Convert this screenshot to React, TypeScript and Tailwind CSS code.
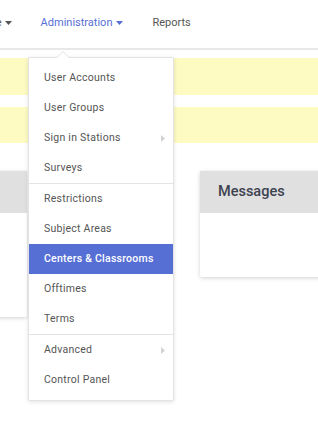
const items: { label: string; sub?: boolean; active?: boolean; divider?: boolean }[] = [
  { label: 'User Accounts' },
  { label: 'User Groups' },
  { label: 'Sign in Stations', sub: true },
  { label: 'Surveys', divider: true },
  { label: 'Restrictions' },
  { label: 'Subject Areas' },
  { label: 'Centers & Classrooms', active: true },
  { label: 'Offtimes' },
  { label: 'Terms', divider: true },
  { label: 'Advanced', sub: true },
  { label: 'Control Panel' },
]

function Caret({ className }: { className?: string }) {
  return (
    <svg width="7" height="4" viewBox="0 0 7 4" className={className}>
      <path d="M0 0h7L3.5 4z" fill="currentColor" />
    </svg>
  )
}

function AdminMenu() {
  return (
    <div className="absolute left-[28px] top-[57px] w-[146px] rounded-[2px] border border-[#e3e3e3] bg-white py-[5px] shadow-[0_1px_4px_rgba(0,0,0,0.12)]">
      <div className="absolute -top-[7px] left-[27px] h-0 w-0 border-x-[7px] border-b-[7px] border-x-transparent border-b-[#e3e3e3]" />
      <div className="absolute -top-[6px] left-[28px] h-0 w-0 border-x-[6px] border-b-[6px] border-x-transparent border-b-white" />
      {items.map((it) => (
        <div key={it.label} className={it.divider ? 'border-b border-[#e3e3e3]' : ''}>
          <div
            className={
              'flex h-[30px] items-center justify-between pl-[15px] pr-[8px] text-[10.5px] tracking-[0.25px] ' +
              (it.active ? 'bg-[#566fd5] font-medium text-white' : 'text-[#555]')
            }
          >
            <span>{it.label}</span>
            {it.sub && (
              <svg width="4" height="7" viewBox="0 0 4 7">
                <path d="M0 0l4 3.5L0 7z" fill="#d2d2d2" />
              </svg>
            )}
          </div>
        </div>
      ))}
    </div>
  )
}

export default function App() {
  return (
    <div className="relative h-[421px] w-[318px] overflow-hidden bg-white font-['Roboto',sans-serif]">
      <div className="flex h-[50px] items-start gap-[29px] border-b-2 border-[#e8e8e8] pt-[15px] text-[11px]">
        <div className="-ml-[28px] flex shrink-0 items-center gap-[3px] text-[#555]">
          <span>Home</span>
          <Caret className="text-[#555]" />
        </div>
        <div className="flex shrink-0 items-center gap-[4px] text-[#566fd5]">
          <span>Administration</span>
          <Caret />
        </div>
        <div className="shrink-0 text-[#555]">Reports</div>
      </div>

      <div className="mt-[8px] h-[37px] bg-[#fdfbc1]" />
      <div className="mt-[12px] h-[36px] bg-[#fdfbc1]" />

      <div className="mt-[28px] flex gap-[173px]">
        <div className="-ml-[173px] h-[146px] w-[200px] shrink-0 rounded-[2px] bg-white shadow-[0_1px_4px_rgba(0,0,0,0.18)]">
          <div className="h-[42px] bg-[#e0e0e0]" />
        </div>
        <div className="h-[106px] w-[140px] shrink-0 rounded-[2px] bg-white shadow-[0_1px_4px_rgba(0,0,0,0.18)]">
          <div className="flex h-[42px] items-center bg-[#e0e0e0] pl-[18px] text-[14.5px] font-medium text-[#3d4350]">
            Messages
          </div>
        </div>
      </div>

      <AdminMenu />
    </div>
  )
}
